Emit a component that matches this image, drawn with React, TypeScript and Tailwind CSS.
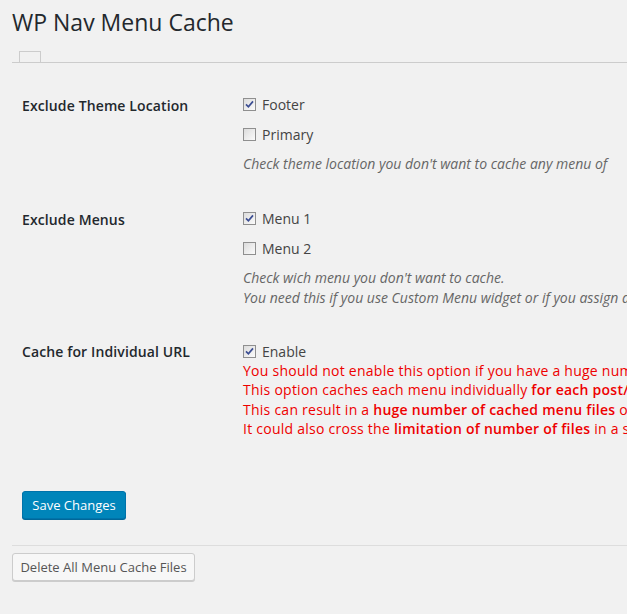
import React, { useState } from 'react';

const font = { fontFamily: '"Open Sans", "Liberation Sans", sans-serif' };

const Checkbox: React.FC<{ checked: boolean; onChange: () => void }> = ({ checked, onChange }) => (
  <span
    role="checkbox"
    aria-checked={checked}
    onClick={onChange}
    className="inline-flex h-[13px] w-[13px] shrink-0 cursor-pointer items-center justify-center border border-[#8f8f8f] bg-gradient-to-br from-[#dcdcdc] to-[#fbfbfb]"
  >
    {checked && (
      <svg width="9" height="9" viewBox="0 0 9 9">
        <path d="M1 4.4 L3.4 6.8 L8 1.4" fill="none" stroke="#3b4d92" strokeWidth="1.7" />
      </svg>
    )}
  </span>
);

const Option: React.FC<{ label: string; checked: boolean; onChange: () => void; height: string }> = ({
  label,
  checked,
  onChange,
  height,
}) => (
  <label className={`flex items-center gap-[6px] ${height} text-[14px] text-[#444]`}>
    <Checkbox checked={checked} onChange={onChange} />
    <span>{label}</span>
  </label>
);

const App: React.FC = () => {
  const [opts, setOpts] = useState({
    footer: true,
    primary: false,
    menu1: true,
    menu2: false,
    enable: true,
  });
  const toggle = (k: keyof typeof opts) => setOpts((o) => ({ ...o, [k]: !o[k] }));

  return (
    <div className="min-h-screen w-full overflow-hidden bg-[#f1f1f1]" style={font}>
      <div className="w-[1000px] whitespace-nowrap pl-[12px]">
        {/* Title */}
        <h1 className="pt-[8px] text-[23px] font-normal leading-[29px] text-[#23282d]">WP Nav Menu Cache</h1>

        {/* Tabs */}
        <div className="mt-[14px] flex border-b border-[#ccc]">
          <div className="ml-[7px] h-[11px] w-[22px] border border-b-0 border-[#ccc]" />
        </div>

        {/* Exclude Theme Location */}
        <div className="mt-[26px] flex">
          <div className="w-[231px] pl-[10px] pt-[7px] text-[14px] font-semibold leading-[20px] tracking-[0.12px] text-[#23282d]">
            Exclude Theme Location
          </div>
          <div>
            <Option label="Footer" checked={opts.footer} onChange={() => toggle('footer')} height="h-[30px]" />
            <Option label="Primary" checked={opts.primary} onChange={() => toggle('primary')} height="h-[30px]" />
            <p className="mt-[5px] text-[14px] italic leading-[20px] text-[#666]">
              Check theme location you don't want to cache any menu of
            </p>
          </div>
        </div>

        {/* Exclude Menus */}
        <div className="mt-[29px] flex">
          <div className="w-[231px] pl-[10px] pt-[7px] text-[14px] font-semibold leading-[20px] tracking-[0.12px] text-[#23282d]">
            Exclude Menus
          </div>
          <div>
            <Option label="Menu 1" checked={opts.menu1} onChange={() => toggle('menu1')} height="h-[30px]" />
            <Option label="Menu 2" checked={opts.menu2} onChange={() => toggle('menu2')} height="h-[30px]" />
            <p className="mt-[5px] text-[14px] italic leading-[20px] text-[#666]">
              Check wich menu you don't want to cache.
              <br />
              You need this if you use Custom Menu widget or if you assign a menu to a theme location manually.
            </p>
          </div>
        </div>

        {/* Cache for Individual URL */}
        <div className="mt-[33px] flex">
          <div className="w-[231px] pl-[10px] pt-[1px] text-[14px] font-semibold leading-[20px] tracking-[0.12px] text-[#23282d]">
            Cache for Individual URL
          </div>
          <div>
            <Option label="Enable" checked={opts.enable} onChange={() => toggle('enable')} height="h-[20px]" />
            <div className="text-[14px] leading-[19.4px] tracking-[0.25px] text-[#e00]">
              <div>You should not enable this option if you have a huge number of posts, pages or terms.</div>
              <div>
                This option caches each menu individually <b className="font-semibold">for each post/page/term</b>.
              </div>
              <div>
                This can result in a <b className="font-semibold">huge number of cached menu files</b> on your server.
              </div>
              <div>
                It could also cross the <b className="font-semibold">limitation of number of files</b> in a single directory.
              </div>
            </div>
          </div>
        </div>

        {/* Save */}
        <div className="mt-[52px] pl-[10px]">
          <button
            type="submit"
            className="h-[28px] w-[104px] rounded-[3px] border border-[#0073aa] bg-[#0085ba] text-center text-[13px] leading-[26px] text-white shadow-[0_1px_0_#006799]"
          >
            Save Changes
          </button>
        </div>

        <div className="mt-[26px] border-t border-[#ddd]" />

        <div className="mt-[7px]">
          <button
            type="button"
            className="h-[28px] w-[183px] rounded-[3px] border border-[#ccc] bg-[#f7f7f7] text-center text-[13px] leading-[26px] text-[#555] shadow-[0_1px_0_#ccc]"
          >
            Delete All Menu Cache Files
          </button>
        </div>
      </div>
    </div>
  );
};

export default App;
